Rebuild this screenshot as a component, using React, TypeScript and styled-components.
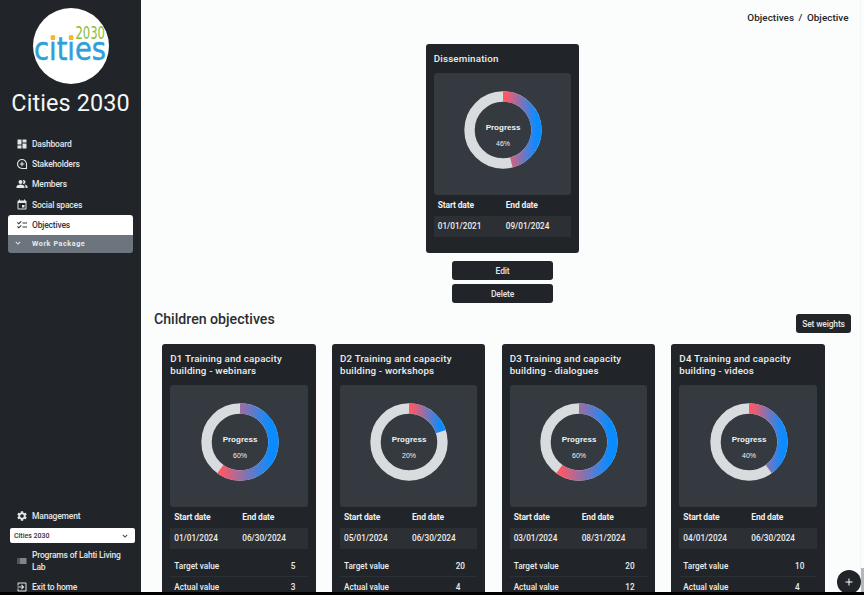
import React from "react";
import styled, { createGlobalStyle, css } from "styled-components";
import {
  MdDashboard,
  MdPeopleAlt,
  MdEvent,
  MdChecklist,
  MdSettings,
  MdList,
  MdExitToApp,
  MdExpandMore,
  MdAdd,
} from "react-icons/md";

const GlobalStyle = createGlobalStyle`
  * { box-sizing: border-box; }
  body {
    margin: 0;
    background: #000;
    font-family: Roboto, "Liberation Sans", sans-serif;
    color: #212529;
    overflow: hidden;
  }
`;

const Screen = styled.div`
  display: flex;
  position: relative;
  width: 864px;
  height: 592px;
  overflow: hidden;
  background: #fbfcfc;
`;

const Sidebar = styled.aside`
  display: flex;
  flex-direction: column;
  flex: none;
  width: 141px;
  height: 592px;
  padding: 8px 8px 0;
  background: #212529;
  color: #e4e6e8;
`;

const Logo = styled.svg`
  display: block;
  flex: none;
  width: 76px;
  height: 76px;
  margin-left: 24.5px;
  overflow: visible;
`;

const Brand = styled.h1`
  flex: none;
  margin: 5px 0 0 0;
  font-size: 23.4px;
  font-weight: 400;
  line-height: 28px;
  text-align: center;
  white-space: nowrap;
  letter-spacing: 0.12px;
  color: #f5f6f7;
`;

const Nav = styled.nav`
  display: flex;
  flex: none;
  flex-direction: column;
  margin-top: 17px;
`;

const NavItem = styled.a<{ $active?: boolean; $height?: number }>`
  display: flex;
  flex: none;
  align-items: center;
  gap: 4px;
  height: ${(p) => p.$height ?? 20.2}px;
  padding-left: 8px;
  font-size: 8.5px;
  line-height: 12px;
  font-weight: 500;
  letter-spacing: -0.18px;
  ${(p) =>
    p.$active &&
    css`
      background: #fff;
      color: #30353a;
      border-radius: 3px 3px 0 0;
    `}
  svg {
    flex: none;
    width: 12px;
    height: 12px;
  }
`;

const SubItem = styled.a`
  display: flex;
  align-items: center;
  gap: 9px;
  height: 18px;
  padding: 0 0 1px 5px;
  border-radius: 0 0 3px 3px;
  background: #6c757d;
  color: #e9ebed;
  font-size: 7.2px;
  font-weight: 700;
  letter-spacing: 0.58px;
  svg {
    width: 10px;
    height: 10px;
  }
`;

const SidebarFooter = styled.div`
  display: flex;
  flex-direction: column;
  flex: none;
  margin-top: auto;
  height: 86px;
`;

const ProjectSelect = styled.div`
  display: flex;
  flex: none;
  align-items: center;
  justify-content: space-between;
  width: 125px;
  height: 15px;
  margin: 3px 0 0 2px;
  padding: 0 5px 0 4px;
  border-radius: 2px;
  background: #fff;
  color: #30353a;
  font-size: 7px;
  font-weight: 500;
  svg {
    width: 10px;
    height: 10px;
  }
`;

const Main = styled.main`
  display: flex;
  flex-direction: column;
  flex: 1;
  min-width: 0;
  height: 592px;
  padding-left: 13px;
`;

const Breadcrumb = styled.div`
  flex: none;
  height: 44px;
  padding: 12px 15.5px 0 0;
  text-align: right;
  font-size: 9.9px;
  line-height: 12px;
  font-weight: 500;
  word-spacing: 2px;
  letter-spacing: 0.04px;
`;

const Overview = styled.section`
  display: flex;
  flex-direction: column;
  flex: none;
  align-items: center;
  width: 697px;
`;

const Card = styled.article<{ $height: number }>`
  display: flex;
  flex-direction: column;
  flex: none;
  width: 153.5px;
  height: ${(p) => p.$height}px;
  padding: 9px 8px 0;
  border-radius: 3px;
  background: #212529;
  color: #eceeef;
`;

const CardTitle = styled.h3`
  margin: 0 0 8px;
  font-size: 9.75px;
  line-height: 12px;
  font-weight: 500;
  letter-spacing: 0.18px;
  white-space: pre-line;
`;

const ChartPanel = styled.div`
  display: flex;
  flex: none;
  justify-content: center;
  height: 122px;
  padding-top: 17.3px;
  border-radius: 3px;
  background: #343a40;
`;

const Donut = styled.svg`
  display: block;
  width: 80px;
  height: 80px;
  margin-left: 1px;
`;

const DonutText = styled.text<{ $strong?: boolean }>`
  fill: #f1f3f5;
  font-family: "Liberation Sans", sans-serif;
  font-size: ${(p) => (p.$strong ? 8 : 7)}px;
  font-weight: ${(p) => (p.$strong ? 700 : 400)};
  text-anchor: middle;
`;

const DateRow = styled.div<{ $head?: boolean }>`
  display: grid;
  grid-template-columns: 68px 1fr;
  align-items: center;
  flex: none;
  height: ${(p) => (p.$head ? 20.5 : 21.5)}px;
  padding-left: 4px;
  background: ${(p) => (p.$head ? "transparent" : "#2c3034")};
  font-size: ${(p) => (p.$head ? 8.5 : 8.2)}px;
  font-weight: ${(p) => (p.$head ? 700 : 500)};
  letter-spacing: ${(p) => (p.$head ? -0.17 : 0)}px;
`;

const Values = styled.div`
  display: grid;
  grid-template-columns: 1fr auto;
  margin-top: 7.5px;
`;

const ValueRow = styled.div`
  display: grid;
  grid-column: 1 / -1;
  grid-template-columns: subgrid;
  align-items: center;
  height: 20.5px;
  padding: 0 12.5px 0 4px;
  border-bottom: 1px solid #2b3035;
  font-size: 8.2px;
  font-weight: 500;
`;

const Button = styled.button<{ $width: number }>`
  display: block;
  flex: none;
  width: ${(p) => p.$width}px;
  height: 19px;
  padding: 0;
  border: 0;
  border-radius: 3px;
  background: #212529;
  color: #e4e6e8;
  font: 500 8.5px Roboto, sans-serif;
  letter-spacing: -0.16px;
`;

const Actions = styled.div`
  display: flex;
  flex-direction: column;
  gap: 4px;
  margin-top: 8px;
`;

const SectionHeader = styled.header`
  display: flex;
  flex: none;
  align-items: flex-start;
  justify-content: space-between;
  height: 34px;
  margin-top: 7px;
  padding-right: 13px;
`;

const SectionTitle = styled.h2`
  margin: 0;
  font-size: 14.15px;
  line-height: 18px;
  font-weight: 500;
  color: #2a2e32;
`;

const HeaderAction = styled.div`
  padding-top: 4px;
`;

const CardGrid = styled.div`
  display: flex;
  flex: none;
  gap: 16.2px;
  padding-left: 8.3px;
`;

const ScrollEdge = styled.div`
  position: absolute;
  top: 0;
  right: 0;
  width: 4px;
  height: 592px;
  border-left: 1px solid #f3f4f5;
`;

const ScrollThumb = styled.div`
  position: absolute;
  right: 0;
  bottom: 0;
  width: 3px;
  height: 24px;
  background: #b5b7b9;
`;

const AddButton = styled.button`
  display: flex;
  position: absolute;
  align-items: center;
  justify-content: center;
  left: 837px;
  top: 570px;
  width: 24px;
  height: 24px;
  padding: 0;
  border: 0;
  border-radius: 50%;
  background: #212529;
  color: #fff;
  svg {
    width: 12px;
    height: 12px;
  }
`;

const CENTER = 40;
const OUTER = 38.7;
const INNER = 28.3;

function arcPath(percent: number) {
  const angle = (percent / 100) * Math.PI * 2;
  const large = percent > 50 ? 1 : 0;
  const sin = Math.sin(angle);
  const cos = Math.cos(angle);
  return [
    `M${CENTER} ${CENTER - OUTER}`,
    `A${OUTER} ${OUTER} 0 ${large} 1 ${CENTER + OUTER * sin} ${CENTER - OUTER * cos}`,
    `L${CENTER + INNER * sin} ${CENTER - INNER * cos}`,
    `A${INNER} ${INNER} 0 ${large} 0 ${CENTER} ${CENTER - INNER}Z`,
  ].join("");
}

function ProgressDonut({ id, percent }: { id: string; percent: number }) {
  return (
    <Donut viewBox="0 0 80 80">
      <defs>
        <linearGradient id={id}>
          <stop offset="0.06" stopColor="#ff5864" />
          <stop offset="0.86" stopColor="#0a8cff" />
        </linearGradient>
      </defs>
      <circle cx="40" cy="40" r="33.5" fill="none" stroke="#d9dcde" strokeWidth="10.4" />
      <path d={arcPath(percent)} fill={`url(#${id})`} />
      <DonutText $strong x="40" y="40.3">Progress</DonutText>
      <DonutText x="40" y="56.3">{`${percent}%`}</DonutText>
    </Donut>
  );
}

type Objective = {
  id: string;
  title: string;
  percent: number;
  start: string;
  end: string;
  target?: number;
  actual?: number;
};

function ObjectiveCard({ item, height }: { item: Objective; height: number }) {
  return (
    <Card $height={height}>
      <CardTitle>{item.title}</CardTitle>
      <ChartPanel>
        <ProgressDonut id={`ring-${item.id}`} percent={item.percent} />
      </ChartPanel>
      <DateRow $head>
        <span>Start date</span>
        <span>End date</span>
      </DateRow>
      <DateRow>
        <span>{item.start}</span>
        <span>{item.end}</span>
      </DateRow>
      {item.target !== undefined && (
        <Values>
          <ValueRow>
            <span>Target value</span>
            <span>{item.target}</span>
          </ValueRow>
          <ValueRow>
            <span>Actual value</span>
            <span>{item.actual}</span>
          </ValueRow>
        </Values>
      )}
    </Card>
  );
}

const parent: Objective = {
  id: "main", title: "Dissemination", percent: 46, start: "01/01/2021", end: "09/01/2024",
};

const children: Objective[] = [
  { id: "d1", title: "D1 Training and capacity\nbuilding - webinars", percent: 60, start: "01/01/2024", end: "06/30/2024", target: 5, actual: 3 },
  { id: "d2", title: "D2 Training and capacity\nbuilding - workshops", percent: 20, start: "05/01/2024", end: "06/30/2024", target: 20, actual: 4 },
  { id: "d3", title: "D3 Training and capacity\nbuilding - dialogues", percent: 60, start: "03/01/2024", end: "08/31/2024", target: 20, actual: 12 },
  { id: "d4", title: "D4 Training and capacity\nbuilding - videos", percent: 40, start: "04/01/2024", end: "06/30/2024", target: 10, actual: 4 },
];

function StakeholdersIcon() {
  return (
    <svg viewBox="0 0 24 24" fill="none" stroke="currentColor" strokeWidth="2.2">
      <path d="M12 3a9 9 0 1 0 0 18h9v-9a9 9 0 0 0-9-9Z" />
      <path d="M12 7.5v9M7.5 12h9" />
    </svg>
  );
}

function CitiesLogo() {
  return (
    <Logo viewBox="0 0 76 76">
      <circle cx="38" cy="38" r="38" fill="#fff" />
      <g fontFamily="'DejaVu Sans', sans-serif">
        <text x="1" y="52" fontSize="32" fill="#2e9fd8" stroke="#2e9fd8" strokeWidth="0.5" textLength="72" lengthAdjust="spacingAndGlyphs">cities</text>
        <text x="42.5" y="31.3" fontSize="17" fill="#8cbd36" textLength="29.5" lengthAdjust="spacingAndGlyphs">2030</text>
      </g>
      <rect x="17.6" y="27.2" width="4.6" height="4.8" rx="1.4" fill="#f2b632" />
      <rect x="35.8" y="27.2" width="4.6" height="4.8" rx="1.4" fill="#f2b632" />
    </Logo>
  );
}

export default function App() {
  return (
    <>
      <GlobalStyle />
      <Screen>
        <Sidebar>
          <CitiesLogo />
          <Brand>Cities 2030</Brand>
          <Nav>
            <NavItem><MdDashboard />Dashboard</NavItem>
            <NavItem><StakeholdersIcon />Stakeholders</NavItem>
            <NavItem><MdPeopleAlt />Members</NavItem>
            <NavItem><MdEvent />Social spaces</NavItem>
            <NavItem $active><MdChecklist />Objectives</NavItem>
            <SubItem><MdExpandMore />Work Package</SubItem>
          </Nav>
          <SidebarFooter>
            <NavItem $height={19}><MdSettings />Management</NavItem>
            <ProjectSelect>Cities 2030<MdExpandMore /></ProjectSelect>
            <NavItem $height={36}><MdList /><span>Programs of Lahti Living<br />Lab</span></NavItem>
            <NavItem $height={16}><MdExitToApp />Exit to home</NavItem>
          </SidebarFooter>
        </Sidebar>
        <Main>
          <Breadcrumb>Objectives / Objective</Breadcrumb>
          <Overview>
            <ObjectiveCard item={parent} height={209} />
            <Actions>
              <Button $width={101}>Edit</Button>
              <Button $width={101}>Delete</Button>
            </Actions>
          </Overview>
          <SectionHeader>
            <SectionTitle>Children objectives</SectionTitle>
            <HeaderAction><Button $width={55}>Set weights</Button></HeaderAction>
          </SectionHeader>
          <CardGrid>
            {children.map((item) => (
              <ObjectiveCard key={item.id} item={item} height={270} />
            ))}
          </CardGrid>
        </Main>
        <ScrollEdge />
        <ScrollThumb />
        <AddButton><MdAdd /></AddButton>
      </Screen>
    </>
  );
}
